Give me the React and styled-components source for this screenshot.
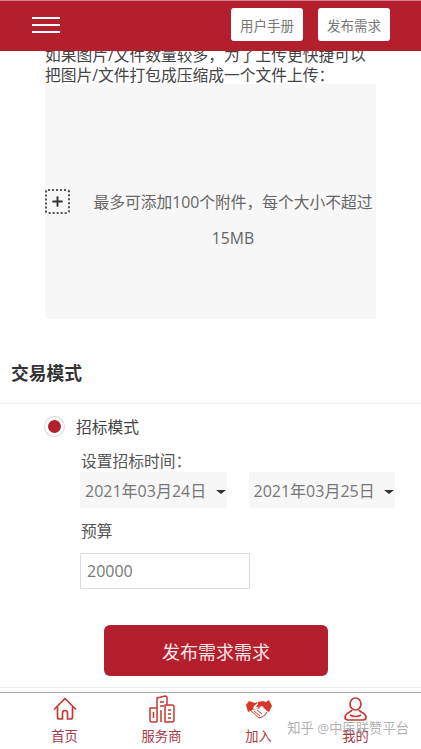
import React from "react";
import styled, { createGlobalStyle } from "styled-components";
import { Plus } from "lucide-react";

const GlobalStyle = createGlobalStyle`
  html, body { margin: 0; padding: 0; background: #fff; }
  * { box-sizing: border-box; }
  body { font-family: "Open Sans", "Noto Sans CJK SC", sans-serif; color: #333; }
`;

const Page = styled.div`
  position: relative;
  width: 421px;
  height: 749px;
  display: flex;
  flex-direction: column;
  overflow: hidden;
`;

const Header = styled.header`
  position: relative;
  z-index: 2;
  flex: none;
  height: 51px;
  background: #b31f2c;
  border-top: 1px solid #d9808a;
  display: flex;
  align-items: center;
  padding: 0 31px 3px 32px;
  gap: 15px;
`;

const Burger = styled.div`
  width: 28px;
  display: flex;
  flex-direction: column;
  gap: 5px;
  margin-right: auto;
  span { display: block; height: 2px; background: #fff; }
`;

const HeaderButton = styled.button`
  width: 72px;
  height: 33px;
  background: #fff;
  border: 0;
  border-radius: 3px;
  color: #777;
  font: 13.5px "Noto Sans CJK SC", sans-serif;
  padding: 0;
`;

const Content = styled.main`
  flex: 1;
  min-height: 0;
  margin-top: -6px;
  overflow: hidden;
`;

const Upload = styled.section`
  padding: 0 45px;
`;

const Hint = styled.p`
  margin: 0;
  font-size: 15.75px;
  line-height: 20px;
  color: #444;
`;

const DropZone = styled.div`
  width: 331px;
  height: 235px;
  margin-top: -1px;
  background: #f7f7f7;
  display: flex;
  align-items: center;
`;

const AddBox = styled.div`
  flex: none;
  width: 25px;
  height: 25px;
  border: 2px dotted #555;
  border-radius: 3px;
  display: flex;
  align-items: center;
  justify-content: center;
  color: #333;
`;

const DropText = styled.div`
  flex: 1;
  text-align: center;
  font-size: 15.75px;
  line-height: 36px;
  color: #666;
  padding: 36px 0 0 20px;
`;

const SectionTitle = styled.h2`
  margin: 0;
  padding: 42px 11px 0;
  height: 85px;
  font-size: 17.75px;
  line-height: 24px;
  font-weight: 700;
  color: #333;
  border-bottom: 1px solid #f0f0f0;
`;

const Mode = styled.div`
  display: flex;
  align-items: center;
  gap: 12px;
  padding: 11px 0 0 45px;
  height: 34px;
  font-size: 15.75px;
  color: #444;
`;

const Radio = styled.span`
  width: 19px;
  height: 19px;
  border-radius: 50%;
  background: #b31f2c;
  border: 3px solid #fff;
  box-shadow: 0 0 0 1px #d6d6e4;
`;

const Fields = styled.div`
  padding: 11px 0 0 80px;
`;

const Label = styled.div`
  padding-left: 1px;
  font-size: 15.75px;
  line-height: 24px;
  color: #555;
`;

const Dates = styled.div`
  display: flex;
  gap: 22px;
  margin-top: -1px;
`;

const DateSelect = styled.div`
  width: 146.5px;
  height: 36px;
  background: #f7f7f7;
  display: flex;
  align-items: center;
  justify-content: space-between;
  padding: 0 0 0 5px;
  font-size: 16px;
  color: #777;
  white-space: nowrap;
`;

const Caret = styled.span`
  width: 0;
  height: 0;
  margin: 4px 1px 0 0;
  border-left: 5px solid transparent;
  border-right: 5px solid transparent;
  border-top: 4px solid #333;
`;

const BudgetLabel = styled(Label)`
  margin-top: 11px;
`;

const BudgetInput = styled.div`
  width: 170px;
  height: 36px;
  margin-top: 10px;
  border: 1px solid #ddd;
  padding-left: 6px;
  font-size: 16px;
  line-height: 34px;
  color: #777;
`;

const Submit = styled.button`
  display: block;
  width: 224px;
  height: 51px;
  margin: 36px 0 0 104px;
  background: #b31f2c;
  border: 0;
  border-radius: 6px;
  color: #f6e6e8;
  font: 18px "Noto Sans CJK SC", sans-serif;
`;

const Divider = styled.hr`
  margin: 11px 0 0;
  border: 0;
  border-top: 1px solid #eee;
`;

const TabBar = styled.nav`
  flex: none;
  height: 57px;
  background: #fff;
  border-top: 1px solid #aaa;
  display: grid;
  grid-template-columns: repeat(4, 97px);
  padding: 2px 0 0 16px;
`;

const Tab = styled.div`
  display: flex;
  flex-direction: column;
  align-items: center;
  gap: 5px;
  font-size: 13.3px;
  line-height: 16px;
  color: #a83a45;
`;

const IconSlot = styled.div`
  height: 28px;
  display: flex;
  align-items: center;
  justify-content: center;
  svg { display: block; }
`;

const Watermark = styled.div`
  position: absolute;
  right: 12px;
  top: 720px;
  font-size: 13.3px;
  line-height: 16px;
  color: rgba(150, 150, 150, 0.75);
  white-space: nowrap;
`;

const Home = () => (
  <svg width="24" height="24" viewBox="0 0 24 24" fill="none" stroke="#c8392f" strokeWidth="1.7" strokeLinecap="round" strokeLinejoin="round">
    <path d="M1.5 12 12 1.5 22.5 12" />
    <path d="M4.5 10v10a2 2 0 0 0 2 2H9.5v-6a2.5 2.5 0 0 1 5 0v6h3a2 2 0 0 0 2-2V10" />
  </svg>
);

const Shop = () => (
  <svg width="26" height="28" viewBox="0 0 26 28" fill="none" stroke="#c8392f" strokeWidth="1.5" strokeLinejoin="round">
    <path d="M8 27H3a2 2 0 0 1-2-2V13h7" />
    <path d="M8 27V3l8-2a2 2 0 0 1 2 2v7" />
    <path d="M16 27h7a2 2 0 0 0 2-2V12a2 2 0 0 0-2-2h-7z" />
    <path d="M4.5 17v6M11 7h4M11 11h4M12 27V15" />
    <path d="M19 15h3M19 19h3M19 23h3" />
  </svg>
);

const Shake = () => (
  <svg width="26" height="19" viewBox="0 0 26 19" strokeLinejoin="round">
    <path d="M0 5 3 1l6 2 4-1-5 4-1 3 3 0 3-2 2 1-9 2-4 2z" fill="#d9362c" />
    <path d="M12 2l5-1 3 1 3-2 3 6-3 6-2-1-5-5-3 1-3 0 2-3z" fill="#d9362c" />
    <path d="M4 10l9 8 3-1 3-2 2-3M8 11l6 5M11 10l5 4" fill="none" stroke="#c8392f" strokeWidth="1" />
  </svg>
);

const User = () => (
  <svg width="23" height="24" viewBox="0 0 23 24" fill="none" stroke="#c8392f" strokeWidth="1.7" strokeLinejoin="round">
    <ellipse cx="11.5" cy="7" rx="5.5" ry="6" />
    <path d="M8 13c-.5 2-7 3-7 7 0 2 1 3 3 3h15c2 0 3-1 3-3 0-4-6.500-5-7-7" />
    <path d="M6 18c3 2 8 2 11 0" />
  </svg>
);

export default function App() {
  return (
    <Page>
      <GlobalStyle />
      <Header>
        <Burger><span /><span /><span /></Burger>
        <HeaderButton>用户手册</HeaderButton>
        <HeaderButton>发布需求</HeaderButton>
      </Header>
      <Content>
        <Upload>
          <Hint>如果图片/文件数量较多，为了上传更快捷可以把图片/文件打包成压缩成一个文件上传：</Hint>
          <DropZone>
            <AddBox><Plus size={15} strokeWidth={3} /></AddBox>
            <DropText>最多可添加100个附件，每个大小不超过15MB</DropText>
          </DropZone>
        </Upload>
        <SectionTitle>交易模式</SectionTitle>
        <Mode><Radio />招标模式</Mode>
        <Fields>
          <Label>设置招标时间：</Label>
          <Dates>
            <DateSelect>2021年03月24日<Caret /></DateSelect>
            <DateSelect>2021年03月25日<Caret /></DateSelect>
          </Dates>
          <BudgetLabel>预算</BudgetLabel>
          <BudgetInput>20000</BudgetInput>
        </Fields>
        <Submit>发布需求需求</Submit>
        <Divider />
      </Content>
      <TabBar>
        <Tab><IconSlot><Home /></IconSlot>首页</Tab>
        <Tab><IconSlot><Shop /></IconSlot>服务商</Tab>
        <Tab><IconSlot><Shake /></IconSlot>加入</Tab>
        <Tab><IconSlot><User /></IconSlot>我的</Tab>
      </TabBar>
      <Watermark>知乎 @中医联赞平台</Watermark>
    </Page>
  );
}
